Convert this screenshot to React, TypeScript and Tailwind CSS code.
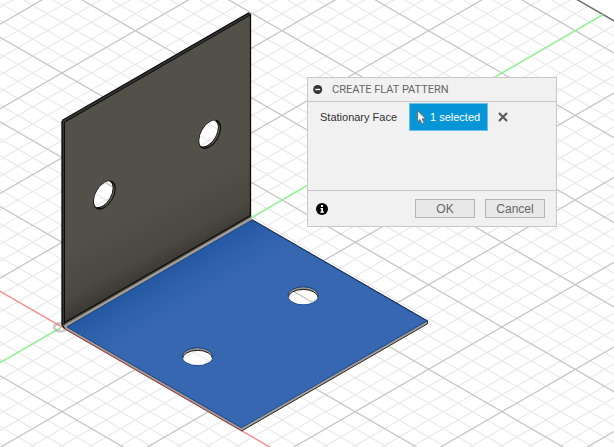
const ORIGIN = { x: 62, y: 327 }
const SLOPE = 0.5774
const STEP = 16.933
const CELLS = Array.from({ length: 100 }, (_, i) => i - 50)

// One family of parallel grid lines, running up or down to the right
function GridLines({ dir, major }: { dir: 1 | -1; major: boolean }) {
    return (
        <g stroke={major ? "#c6c6c6" : "#e9e9e9"} strokeWidth={major ? 1.3 : 1.2}>
            {CELLS.filter((i) => (i % 5 === 0) === major).map((i) => {
                const y = ORIGIN.y + i * STEP
                return <line key={i} x1={-100} y1={y + dir * SLOPE * -162} x2={800} y2={y + dir * SLOPE * 738} />
            })}
        </g>
    )
}

function Floor() {
    return (
        <g clipPath="url(#floor)">
            <GridLines dir={1} major={false} />
            <GridLines dir={-1} major={false} />
            <GridLines dir={1} major />
            <GridLines dir={-1} major />
        </g>
    )
}

const WALL_HOLES = [
    { x: 104.5, y: 195 },
    { x: 209.8, y: 134.3 },
]

const BASE_HOLES = [
    { x: 197.5, y: 356.5 },
    { x: 303.2, y: 295.6 },
]

function Viewport() {
    return (
        <svg
            className="absolute inset-0 h-full w-full"
            viewBox="0 0 614 447"
            preserveAspectRatio="xMinYMin slice"
            role="img"
            aria-label="Bent sheet metal bracket"
        >
            <defs>
                <clipPath id="floor">
                    <path d="M-10 -339.4 L900 186 V900 H-10Z" />
                </clipPath>
                <linearGradient id="wall" gradientUnits="userSpaceOnUse" x1="135" y1="210" x2="166" y2="268">
                    <stop offset="0" stopColor="#535049" />
                    <stop offset="0.7" stopColor="#4b4841" />
                    <stop offset="1" stopColor="#3a3832" />
                </linearGradient>
                <linearGradient id="base" gradientUnits="userSpaceOnUse" x1="158" y1="273" x2="180" y2="311">
                    <stop offset="0" stopColor="#2558a3" />
                    <stop offset="0.5" stopColor="#2f61ac" />
                    <stop offset="1" stopColor="#3767b1" />
                </linearGradient>
            </defs>

            <Floor />
            <line x1="570" y1="-4.5" x2="620" y2="24.4" stroke="#6e6e6e" strokeWidth="1.5" />
            <line x1="-2" y1="364" x2="603" y2="14.6" stroke="#8cfa8c" strokeWidth="1.3" />
            <line x1="-2" y1="290" x2="280" y2="452.9" stroke="#ff8f8f" strokeWidth="1.3" />
            <ellipse cx="60.5" cy="327.3" rx="6.5" ry="4" fill="none" stroke="#999" strokeOpacity="0.5" strokeWidth="2.8" />

            {/* Upright flange */}
            <path d="M62 121 L248 13 L250 14 V217 L65 326 L62 324Z" fill="url(#wall)" />
            <path d="M62 121 L248.5 13 L250 15 L64.5 122.5 V326 L62 324Z" fill="#343635" />
            <path d="M62 121 V325 L65 328.5 M62 120.5 L248.5 13 L250.5 14.5 V217" fill="none" stroke="#0b0b0b" strokeWidth="1.3" strokeLinejoin="round" />
            <path d="M64.5 324 V122.3 L250 15.2" fill="none" stroke="#0b0b0b" strokeWidth="1" />

            {/* Bend */}
            <path d="M64.5 323 L251 215.5 V220 L67 327Z" fill="#55524c" />
            <path d="M64.5 322.7 L251 215.2" stroke="#0b0b0b" strokeWidth="1.2" />
            <path d="M65 326 L251.5 218.3" stroke="#a3a09a" strokeWidth="2.2" />

            {/* Base flange */}
            <path d="M64 325 L242 428 L428 320.5 V323.5 L242 431 L65 328.5Z" fill="#a09c95" />
            <path d="M65 329 L241.5 430.8" stroke="#8a3b3b" strokeWidth="1" />
            <path d="M241.5 431 L427.5 323.8 V320.5" fill="none" stroke="#2e2a26" strokeWidth="1" />
            <path d="M67 327 L252 220 L427 321 L241.5 427.8Z" fill="url(#base)" stroke="#154385" strokeWidth="1" />
            <path d="M252 219.5 L427.5 320.8" stroke="#1d3052" strokeWidth="1" />

            {WALL_HOLES.map(({ x, y }, i) => (
                <g key={x}>
                    <clipPath id={`wall-hole-${i}`}>
                        <circle r="12.2" transform={`matrix(0.866 -0.5 0 1 ${x} ${y})`} />
                    </clipPath>
                    <clipPath id={`wall-back-${i}`}>
                        <circle r="12.2" transform={`matrix(0.866 -0.5 0 1 ${x - 2} ${y - 1})`} />
                    </clipPath>
                    <circle r="12.4" transform={`matrix(0.866 -0.5 0 1 ${x} ${y})`} fill="#57544e" stroke="#0b0b0b" strokeWidth="1.3" />
                    <g clipPath={`url(#wall-hole-${i})`}>
                        <g clipPath={`url(#wall-back-${i})`}>
                            <rect x={x - 20} y={y - 20} width="40" height="40" fill="#fff" />
                            <Floor />
                        </g>
                        <circle r="12.2" transform={`matrix(0.866 -0.5 0 1 ${x - 2} ${y - 1})`} fill="none" stroke="#0b0b0b" strokeWidth="1" />
                    </g>
                </g>
            ))}

            {BASE_HOLES.map(({ x, y }, i) => (
                <g key={x}>
                    <clipPath id={`base-hole-${i}`}>
                        <ellipse cx={x} cy={y} rx="15" ry="8.6" />
                    </clipPath>
                    <clipPath id={`base-back-${i}`}>
                        <ellipse cx={x} cy={y + 2.4} rx="15" ry="8.6" />
                    </clipPath>
                    <ellipse cx={x} cy={y} rx="15.2" ry="8.8" fill="#98958e" stroke="#173f7c" strokeWidth="1" />
                    <g clipPath={`url(#base-hole-${i})`}>
                        <g clipPath={`url(#base-back-${i})`}>
                            <rect x={x - 20} y={y - 20} width="40" height="40" fill="#fff" />
                            <Floor />
                        </g>
                        <ellipse cx={x} cy={y + 2.4} rx="15" ry="8.6" fill="none" stroke="#1c1a18" strokeWidth="1" />
                    </g>
                </g>
            ))}
        </svg>
    )
}

export default function App() {
    return (
        <main className="relative min-h-screen overflow-hidden bg-white font-['Liberation_Sans',sans-serif]">
            <Viewport />

            {/* Command dialog */}
            <section
                aria-labelledby="dialog-title"
                className="absolute top-[77px] left-[307px] w-[250px] border border-[#c8c8c8] bg-[#f1f1f1] text-[11px] text-[#333]"
            >
                <header className="flex h-6 items-center gap-[9px] border-b border-[#c8c8c8] px-[5px]">
                    <button type="button" aria-label="Collapse">
                        <svg className="h-[10px] w-[10px]" viewBox="0 0 10 10">
                            <circle cx="4.7" cy="4.5" r="4.5" fill="#333" />
                            <path d="M2.2 4.5 H7.2" stroke="#f1f1f1" strokeWidth="1.4" />
                        </svg>
                    </button>
                    <h1 id="dialog-title" className="font-['Roboto',sans-serif] text-[11px] leading-4 text-[#666]">
                        CREATE FLAT PATTERN
                    </h1>
                </header>

                <div className="flex h-[89px] items-start border-b border-[#c8c8c8] pt-px pl-3">
                    <span id="face-label" className="w-[89px] leading-7">
                        Stationary Face
                    </span>
                    <button
                        type="button"
                        aria-describedby="face-label"
                        className="flex h-7 w-[79px] items-center gap-0.5 border border-[#6cbde8] bg-[#0696d7] pl-1.5 text-white"
                    >
                        <svg className="h-[15px] w-3" viewBox="0 0 12 15">
                            <path
                                d="M1.5 0.8 V11.8 L4 9.6 L5.8 13.8 L8 12.9 L6.2 8.8 H9.8Z"
                                fill="#f2f2f2"
                                stroke="#6b6b6b"
                                strokeWidth="0.9"
                                strokeLinejoin="round"
                            />
                        </svg>
                        1 selected
                    </button>
                    <button type="button" aria-label="Clear selection" className="flex h-7 w-[30px] items-center justify-center">
                        <svg className="h-[10px] w-[10px]" viewBox="0 0 10 10">
                            <path d="M1 1 L9 9 M9 1 L1 9" stroke="#595959" strokeWidth="2.2" />
                        </svg>
                    </button>
                </div>

                <footer className="flex h-[35px] items-center gap-2.5 pr-[11px] pl-2">
                    <button type="button" aria-label="Info" className="mr-auto">
                        <svg className="h-3 w-3" viewBox="0 0 12 12">
                            <circle cx="6" cy="6" r="6" fill="#000" />
                            <path d="M5 2 H7 V4 H5Z M4.500 5 H7 V8.500 H8 V9.800 H4.300 V8.500 H5.200 V6.200 H4.500Z" fill="#fff" />
                        </svg>
                    </button>
                    <button type="button" className="h-[19px] w-[60px] border border-[#b4b4b4] bg-[#e8e8e8] text-xs leading-4 text-[#666]">
                        OK
                    </button>
                    <button type="button" className="h-[19px] w-[60px] border border-[#b4b4b4] bg-[#e8e8e8] text-xs leading-4 text-[#666]">
                        Cancel
                    </button>
                </footer>
            </section>
        </main>
    )
}
